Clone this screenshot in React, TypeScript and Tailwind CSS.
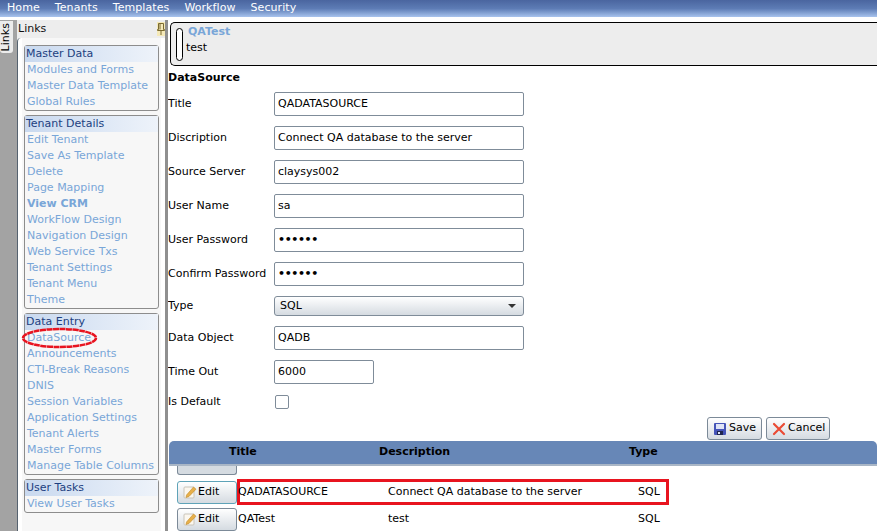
const groups = [
  { title: "Master Data", links: ["Modules and Forms", "Master Data Template", "Global Rules"] },
  {
    title: "Tenant Details",
    links: [
      "Edit Tenant",
      "Save As Template",
      "Delete",
      "Page Mapping",
      "View CRM",
      "WorkFlow Design",
      "Navigation Design",
      "Web Service Txs",
      "Tenant Settings",
      "Tenant Menu",
      "Theme",
    ],
  },
  {
    title: "Data Entry",
    links: [
      "DataSource",
      "Announcements",
      "CTI-Break Reasons",
      "DNIS",
      "Session Variables",
      "Application Settings",
      "Tenant Alerts",
      "Master Forms",
      "Manage Table Columns",
    ],
  },
  { title: "User Tasks", links: ["View User Tasks"] },
];

const fields = [
  { label: "Title", value: "QADATASOURCE" },
  { label: "Discription", value: "Connect QA database to the server" },
  { label: "Source Server", value: "claysys002" },
  { label: "User Name", value: "sa" },
  { label: "User Password", value: "••••••", secret: true },
  { label: "Confirm Password", value: "••••••", secret: true },
];

const PencilIcon = () => (
  <svg width="14" height="14" viewBox="0 0 14 14" className="shrink-0">
    <rect x="1" y="2" width="10" height="11" rx="1" fill="#fbf7ef" stroke="#c9c4ba" />
    <path d="M3.5 10 L10.5 2 L13 4.2 L6 11.5 L3 12.5 Z" fill="#e8b04a" stroke="#c08a2a" strokeWidth="0.6" />
  </svg>
);

const SaveIcon = () => (
  <svg width="14" height="14" viewBox="0 0 14 14" className="shrink-0">
    <rect x="1" y="1" width="12" height="12" rx="1" fill="#4554b8" />
    <rect x="3" y="2" width="8" height="5" fill="#dfe4f6" />
    <rect x="4" y="9" width="6" height="4" fill="#20264f" />
    <rect x="5" y="10" width="2" height="2" fill="#dfe4f6" />
  </svg>
);

const CancelIcon = () => (
  <svg width="14" height="14" viewBox="0 0 14 14" className="shrink-0">
    <path d="M2 2 L12 12 M12 2 L2 12" stroke="#ea4b35" strokeWidth="2.2" strokeLinecap="round" />
  </svg>
);

const PinIcon = () => (
  <svg width="8" height="12" viewBox="0 0 8 12">
    <path d="M1.5 0.5 H6.5 V6.5 H7.5 V7.5 H0.5 V6.5 H1.5 Z M3 1 V6.5 M4 7.5 V12" fill="none" stroke="#7a6a30" />
  </svg>
);

const EditButton = ({ active }: { active?: boolean }) => (
  <button
    className={`flex h-[23px] w-[60px] shrink-0 items-center gap-[1px] rounded-[3px] border bg-gradient-to-b from-white to-[#d5dbe1] pl-[5px] text-[11px] ${
      active ? "border-[#5fa3b8]" : "border-[#7c8a98]"
    }`}
  >
    <PencilIcon />
    Edit
  </button>
);

const Sidebar = () => (
  <aside className="relative flex w-[148px] shrink-0 flex-col bg-[#ededed]">
    <div className="flex h-[18px] shrink-0 items-center justify-between pl-[1px] text-[#111]">
      <span>Links</span>
      <span className="flex h-[14px] w-[8px] items-center justify-center bg-[#f5e9b8]">
        <PinIcon />
      </span>
    </div>
    <div className="flex min-h-0 flex-1 rounded-tl-[4px] border-l border-[#55626f] bg-white pl-[4px] pr-[4px]">
      <div className="flex flex-1 flex-col gap-[4px] bg-[#f7f7f7] px-[2px] pt-[7px]">
        {groups.map((g) => (
          <div key={g.title} className="rounded-[3px] border border-[#8d8d8d] bg-[#f7f7f7]">
            <div className="flex h-[16px] items-center bg-gradient-to-r from-[#c9d9ef] to-[#eef3fa] pl-[1px] text-[#1c3f80]">
              {g.title}
            </div>
            {g.links.map((link) => (
              <div
                key={link}
                className={`flex h-[16px] items-center whitespace-nowrap pl-[2px] text-[#79a6d8] ${
                  link === "View CRM" ? "font-bold" : ""
                }`}
              >
                {link}
              </div>
            ))}
          </div>
        ))}
      </div>
    </div>
    {/* red marker drawn over the DataSource link */}
    <svg className="absolute left-[4px] top-[306px]" width="78" height="24" viewBox="0 0 78 24">
      <ellipse cx="38.5" cy="12" rx="36.5" ry="9" fill="none" stroke="#e8141f" strokeWidth="2.5" strokeDasharray="6 0.5" />
    </svg>
  </aside>
);

const TextRow = ({ label, value, secret }: { label: string; value: string; secret?: boolean }) => (
  <div className="flex h-[34px] items-center">
    <span className="w-[106px] shrink-0 whitespace-nowrap">{label}</span>
    <div
      className={`flex h-[24px] w-[250px] items-center rounded-[2px] border border-[#7f8c99] bg-white pl-[3px] ${
        secret ? "font-bold tracking-[-0.4px]" : ""
      }`}
    >
      {value}
    </div>
  </div>
);

export default function App() {
  return (
    <div className="flex h-[531px] w-[877px] flex-col overflow-hidden bg-white font-['DejaVu_Sans',sans-serif] text-[11px] text-black">
      <nav className="flex h-[17px] shrink-0 items-center gap-[15px] bg-gradient-to-b from-[#4a659f] via-[#5d7cb5] to-[#a9c4ee] pl-[7px] tracking-[0.08px] text-white">
        {["Home", "Tenants", "Templates", "Workflow", "Security"].map((item) => (
          <span key={item}>{item}</span>
        ))}
      </nav>
      <div className="flex min-h-0 flex-1 pt-[3px]">
        <div className="w-[17px] shrink-0 bg-[#a3a3a3]">
          <div className="mt-[1px] flex h-[32px] w-[13px] items-center justify-center rounded-b-[3px] bg-[#ececec] text-black">
            <span className="-rotate-90">Links</span>
          </div>
        </div>
        <Sidebar />
        <div className="w-[3px] shrink-0 bg-[#8f8f8f]" />
        <main className="flex min-w-0 flex-1 flex-col overflow-hidden">
          <div className="mb-[4px] ml-[2px] mt-[2px] flex h-[44px] shrink-0 items-center rounded-l-[5px] border-y border-l border-black bg-[#ededed] pl-[5px]">
            <div className="h-[33px] w-[7px] rounded-full border border-black bg-white" />
            <div className="ml-[3px] flex flex-col pb-[8px]">
              <span className="ml-[2px] font-bold text-[#79a6d8]">QATest</span>
              <span>test</span>
            </div>
          </div>
          <h2 className="flex h-[16px] shrink-0 items-center font-bold">DataSource</h2>
          <div className="mt-[1px] flex shrink-0 flex-col">
            {fields.map((f) => (
              <TextRow key={f.label} {...f} />
            ))}
            <div className="flex h-[30px] items-center">
              <span className="w-[106px] shrink-0">Type</span>
              <div className="flex h-[20px] w-[250px] items-center justify-between rounded-[3px] border border-[#7f8c99] bg-gradient-to-b from-white to-[#d5dbe1] pl-[5px] pr-[7px]">
                SQL
                <span className="h-0 w-0 border-x-[4px] border-t-[4px] border-x-transparent border-t-[#333]" />
              </div>
            </div>
            <TextRow label="Data Object" value="QADB" />
            <div className="flex h-[34px] items-center">
              <span className="w-[106px] shrink-0">Time Out</span>
              <div className="flex h-[24px] w-[100px] items-center rounded-[2px] border border-[#7f8c99] bg-white pl-[3px]">6000</div>
            </div>
            <div className="flex h-[26px] items-center">
              <span className="w-[107px] shrink-0">Is Default</span>
              <div className="h-[14px] w-[14px] rounded-[2px] border border-[#7f8c99] bg-white" />
            </div>
          </div>
          <div className="mt-[2px] flex h-[23px] shrink-0 justify-end gap-[4px] pr-[47px]">
            <button className="flex w-[55px] items-center gap-[2px] rounded-[3px] border border-[#7c8a98] bg-gradient-to-b from-white to-[#d5dbe1] pl-[5px]">
              <SaveIcon />
              Save
            </button>
            <button className="flex w-[64px] items-center gap-[2px] rounded-[3px] border border-[#7c8a98] bg-gradient-to-b from-white to-[#d5dbe1] pl-[5px]">
              <CancelIcon />
              Cancel
            </button>
          </div>
          <div className="ml-[1px] mt-[1px] flex h-[25px] shrink-0 items-center rounded-t-[5px] border-b-2 border-[#a9b6c6] bg-[#6787b7] font-bold">
            <span className="w-[210px] pl-[60px]">Title</span>
            <span className="w-[250px]">Description</span>
            <span>Type</span>
          </div>
          <div className="flex flex-col pl-[9px]">
            <div className="h-[9px] w-[60px] rounded-b-[3px] border border-t-0 border-[#7c8a98] bg-[#d5dbe1]" />
            <div className="mt-[4px] flex h-[26px] items-center">
              <EditButton active />
              <div className="flex h-[26px] w-[432px] items-center border-[3px] border-[#e8141f]">
                <span className="-ml-[2px] w-[150px]">QADATASOURCE</span>
                <span className="w-[250px]">Connect QA database to the server</span>
                <span>SQL</span>
              </div>
            </div>
            <div className="mt-[1px] flex h-[26px] items-center">
              <EditButton />
              <div className="ml-[1px] flex items-center">
                <span className="w-[150px]">QATest</span>
                <span className="w-[250px]">test</span>
                <span>SQL</span>
              </div>
            </div>
          </div>
        </main>
      </div>
    </div>
  );
}
